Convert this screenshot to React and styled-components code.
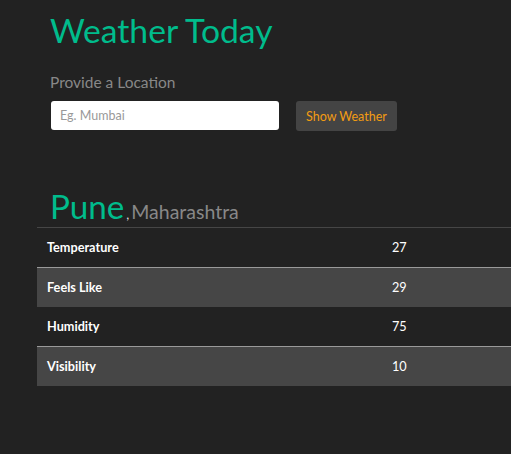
import React from "react";
import styled, { createGlobalStyle } from "styled-components";

const GlobalStyle = createGlobalStyle`
  html, body {
    margin: 0;
    padding: 0;
    background: #222222;
    font-family: Lato, "Liberation Sans", sans-serif;
    color: #ffffff;
  }
`;

const Page = styled.div`
  padding: 0 0 0 37px;
  min-height: 454px;
  box-sizing: border-box;
`;

const Header = styled.div`
  padding: 8px 13px 0;
`;

const Title = styled.h1`
  margin: 0;
  font-size: 33.7px;
  font-weight: 400;
  line-height: 44px;
  color: #00bc8c;
`;

const Label = styled.div`
  margin-top: 20px;
  font-size: 15.5px;
  line-height: 20px;
  color: #888888;
`;

const Form = styled.form`
  display: flex;
  align-items: flex-start;
  gap: 17px;
  margin-top: 9px;
`;

const Input = styled.input`
  width: 228px;
  height: 29px;
  margin-left: 1px;
  box-sizing: border-box;
  border: none;
  border-radius: 3px;
  padding: 0 9px;
  font-family: inherit;
  font-size: 12.5px;
  background: #ffffff;
  &::placeholder {
    color: #999999;
  }
`;

const Button = styled.button`
  height: 30px;
  padding: 0 10px;
  border: none;
  border-radius: 3px;
  background: #444444;
  color: #f39c12;
  font-family: inherit;
  font-size: 12.5px;
`;

const Place = styled.div`
  display: flex;
  align-items: baseline;
  margin: 56px 0 0 13px;
`;

const City = styled.span`
  font-size: 33.2px;
  line-height: 38px;
  color: #00bc8c;
`;

const Comma = styled.span`
  font-size: 13px;
  color: #dddddd;
  margin: 0 2px 0 2px;
`;

const Region = styled.span`
  font-size: 19.5px;
  color: #888888;
`;

const Table = styled.table`
  width: 474px;
  border-collapse: collapse;
  margin-top: 2px;
  font-size: 12.7px;
`;

const Row = styled.tr`
  height: 39.5px;
  background: ${(p) => (p.$striped ? "#464646" : "transparent")};
  border-top: 1px solid ${(p) => (p.$striped ? "#9a9a9a" : "#464646")};
`;

const Key = styled.td`
  padding: 0 10px;
  width: 325px;
  font-weight: 700;
`;

const Value = styled.td`
  padding: 0 10px;
`;

const rows = [
  ["Temperature", 27],
  ["Feels Like", 29],
  ["Humidity", 75],
  ["Visibility", 10],
];

export default function App() {
  return (
    <Page>
      <GlobalStyle />
      <Header>
        <Title>Weather Today</Title>
        <Label>Provide a Location</Label>
        <Form onSubmit={(e) => e.preventDefault()}>
          <Input placeholder="Eg. Mumbai" />
          <Button type="submit">Show Weather</Button>
        </Form>
      </Header>
      <Place>
        <City>Pune</City>
        <Comma>,</Comma>
        <Region>Maharashtra</Region>
      </Place>
      <Table>
        <tbody>
          {rows.map(([k, v], i) => (
            <Row key={k} $striped={i % 2 === 1}>
              <Key>{k}</Key>
              <Value>{v}</Value>
            </Row>
          ))}
        </tbody>
      </Table>
    </Page>
  );
}
